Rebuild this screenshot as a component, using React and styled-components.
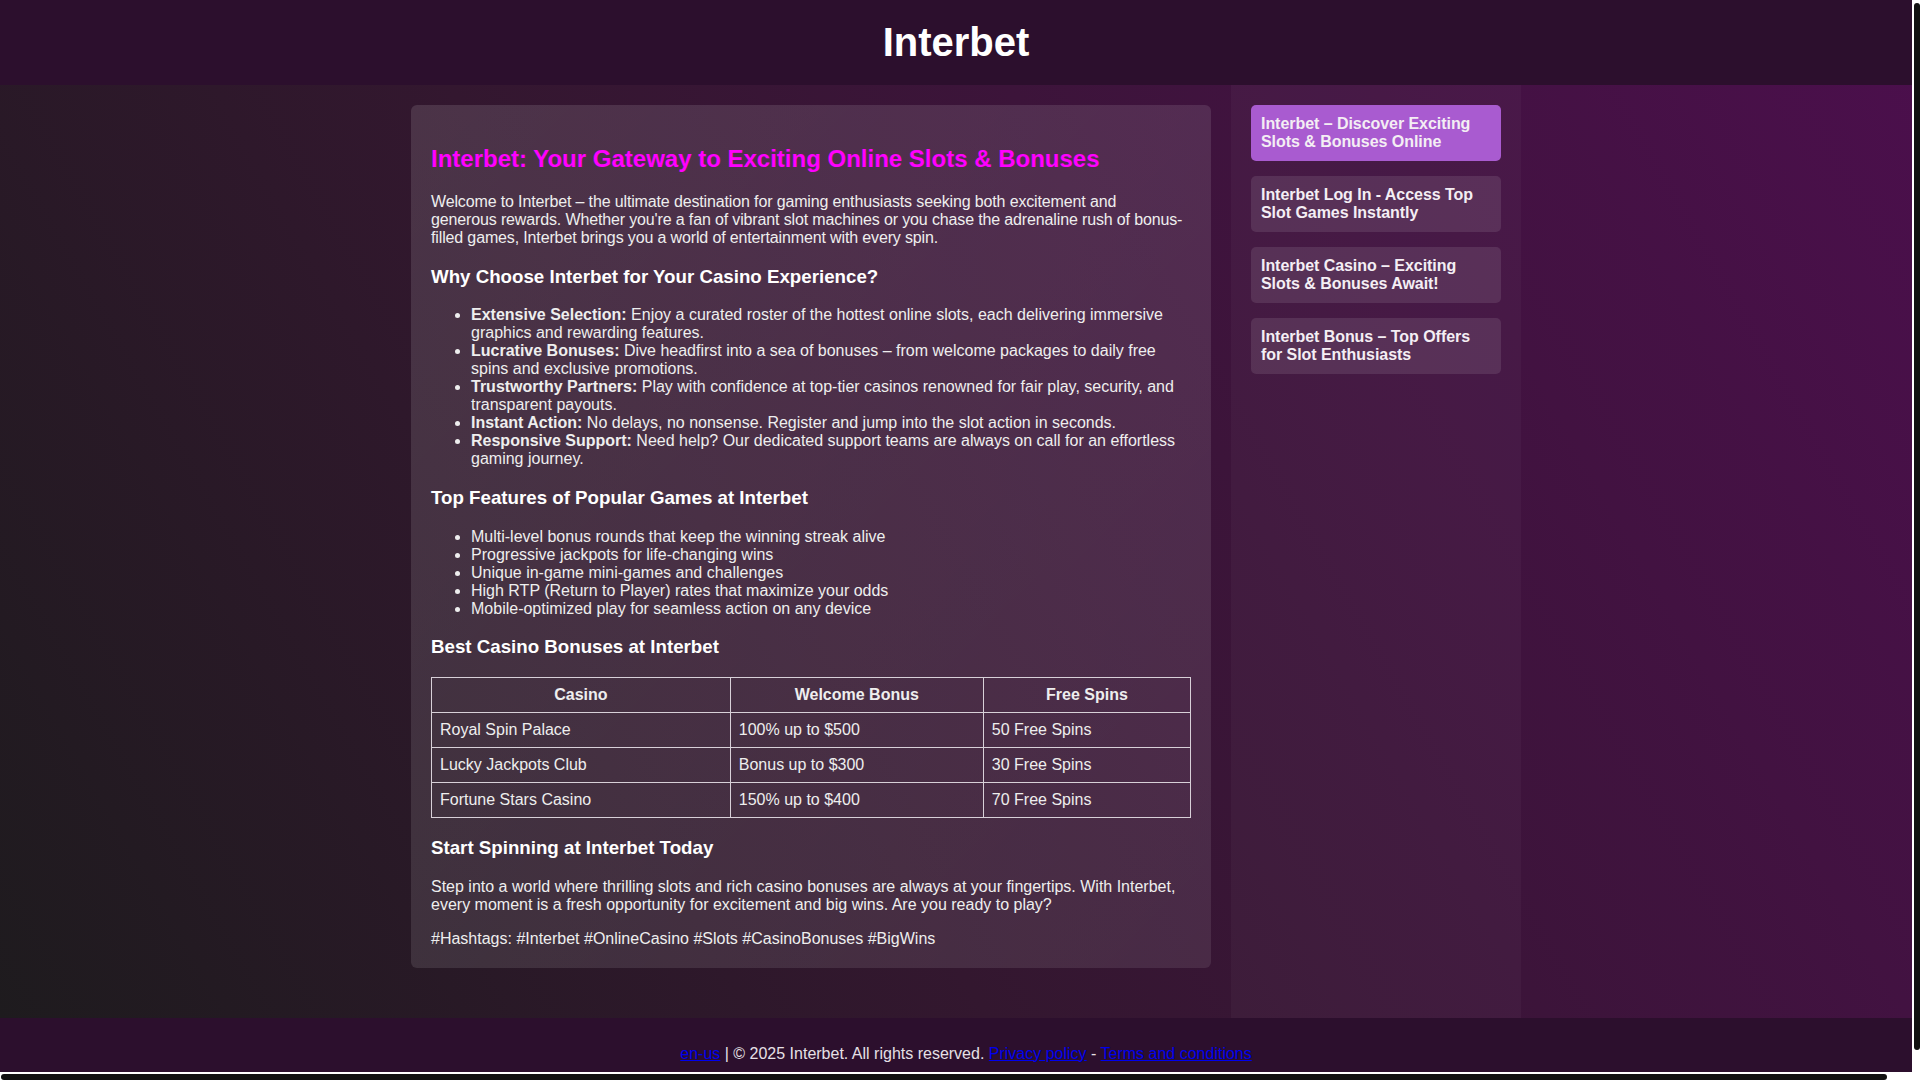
import React from 'react';
import styled, { createGlobalStyle } from 'styled-components';

const GlobalStyle = createGlobalStyle`
  html, body {
    overflow: hidden;
  }
  body {
    margin: 0;
    font-family: "Liberation Sans", Arial, sans-serif;
    font-size: 16px;
    color: #eeeeee;
    background: #2c0f2d;
  }
`;

const Viewport = styled.div`
  width: calc(100vw - 8px);
  height: calc(100vh - 8px);
  overflow: hidden;
`;

const Header = styled.header`
  background-color: #2c0f2d;
  padding: 19px 0 20px;
  text-align: center;
`;

const SiteTitle = styled.h1`
  margin: 0;
  font-size: 40px;
  font-weight: 700;
  color: #ffffff;
  line-height: 46px;
`;

const Page = styled.div`
  width: calc(100% + 20px);
`;

const Main = styled.main`
  display: flex;
  justify-content: center;
  gap: 20px;
  background: linear-gradient(60deg, #1e1b1e 0%, #33172f 40%, #4b0f4c 100%);
`;

const ContentColumn = styled.div`
  width: 800px;
  padding: 20px 0 50px;
`;

const Card = styled.article`
  box-sizing: border-box;
  width: 800px;
  padding: 20px;
  border-radius: 6px;
  background: linear-gradient(135deg, rgba(255, 255, 255, 0.12), rgba(255, 255, 255, 0.09));
`;

const PageTitle = styled.h2`
  font-size: 24px;
  font-weight: 700;
  margin: 19.92px 0;
  color: #ff00ff;
`;

const SectionTitle = styled.h3`
  font-size: 18.72px;
  font-weight: 700;
  margin: 18.72px 0;
  color: #ffffff;
`;

const Paragraph = styled.p`
  margin: 16px 0;
  color: #eeeeee;
  letter-spacing: ${props => (props.$tight ? '-0.14px' : 'normal')};
  &:last-child {
    margin-bottom: 0;
  }
`;

const List = styled.ul`
  margin: 16px 0;
  padding-left: 40px;
  color: #eeeeee;
`;

const Strong = styled.strong`
  font-weight: 700;
`;

const Table = styled.table`
  width: 100%;
  border-collapse: collapse;
  color: #eeeeee;
`;

const Th = styled.th`
  border: 1px solid #d8d0d8;
  padding: 8px;
  font-weight: 700;
  text-align: center;
`;

const Td = styled.td`
  border: 1px solid #d8d0d8;
  padding: 8px;
  text-align: left;
`;

const Sidebar = styled.aside`
  box-sizing: border-box;
  width: 290px;
  padding: 20px;
  background-color: rgba(255, 255, 255, 0.03);
  display: flex;
  flex-direction: column;
  gap: 15px;
`;

const SideLink = styled.a`
  display: block;
  padding: 10px;
  border-radius: 5px;
  font-weight: 700;
  color: #f4eef4;
  text-decoration: none;
  letter-spacing: -0.05px;
  background-color: ${props => (props.$active ? '#a95bd0' : 'rgba(255, 255, 255, 0.1)')};
`;

const Footer = styled.footer`
  background-color: #2c0f2d;
  padding: 27px 0 36px;
  text-align: center;
  color: #e6e0e6;
`;

const FooterLink = styled.a`
  color: #0000ee;
  text-decoration: underline;
`;

/* scrollbars drawn over the page edge, as in the screenshot */
const ScrollTrack = styled.div`
  position: fixed;
  background: #ffffff;
  ${props => (props.$vertical
    ? 'top: 0; right: 0; width: 8px; height: calc(100vh - 8px);'
    : 'left: 0; bottom: 0; height: 8px; width: 100vw;')}
`;

const ScrollThumb = styled.div`
  position: absolute;
  background: #111111;
  border-radius: 4px;
  ${props => (props.$vertical
    ? 'top: 3px; left: 2px; right: 0; bottom: 22px;'
    : 'left: 1px; top: 2px; bottom: 0; width: 1886px;')}
`;

const features = [
  ['Extensive Selection:', ' Enjoy a curated roster of the hottest online slots, each delivering immersive graphics and rewarding features.'],
  ['Lucrative Bonuses:', ' Dive headfirst into a sea of bonuses – from welcome packages to daily free spins and exclusive promotions.'],
  ['Trustworthy Partners:', ' Play with confidence at top-tier casinos renowned for fair play, security, and transparent payouts.'],
  ['Instant Action:', ' No delays, no nonsense. Register and jump into the slot action in seconds.'],
  ['Responsive Support:', ' Need help? Our dedicated support teams are always on call for an effortless gaming journey.'],
];

const gameFeatures = [
  'Multi-level bonus rounds that keep the winning streak alive',
  'Progressive jackpots for life-changing wins',
  'Unique in-game mini-games and challenges',
  'High RTP (Return to Player) rates that maximize your odds',
  'Mobile-optimized play for seamless action on any device',
];

const bonuses = [
  ['Royal Spin Palace', '100% up to $500', '50 Free Spins'],
  ['Lucky Jackpots Club', 'Bonus up to $300', '30 Free Spins'],
  ['Fortune Stars Casino', '150% up to $400', '70 Free Spins'],
];

const sideLinks = [
  'Interbet – Discover Exciting Slots & Bonuses Online',
  'Interbet Log In - Access Top Slot Games Instantly',
  'Interbet Casino – Exciting Slots & Bonuses Await!',
  'Interbet Bonus – Top Offers for Slot Enthusiasts',
];

export default function App() {
  return (
    <>
      <GlobalStyle />
      <Viewport>
        <Header>
          <SiteTitle>Interbet</SiteTitle>
        </Header>
        <Page>
          <Main>
            <ContentColumn>
              <Card>
                <PageTitle>Interbet: Your Gateway to Exciting Online Slots &amp; Bonuses</PageTitle>
                <Paragraph $tight>
                  Welcome to Interbet – the ultimate destination for gaming enthusiasts seeking both excitement and
                  <br />
                  generous rewards. Whether you're a fan of vibrant slot machines or you chase the adrenaline rush of
                  bonus-filled games, Interbet brings you a world of entertainment with every spin.
                </Paragraph>

                <SectionTitle>Why Choose Interbet for Your Casino Experience?</SectionTitle>
                <List>
                  {features.map(([label, text]) => (
                    <li key={label}>
                      <Strong>{label}</Strong>
                      {text}
                    </li>
                  ))}
                </List>

                <SectionTitle>Top Features of Popular Games at Interbet</SectionTitle>
                <List>
                  {gameFeatures.map(item => (
                    <li key={item}>{item}</li>
                  ))}
                </List>

                <SectionTitle>Best Casino Bonuses at Interbet</SectionTitle>
                <Table>
                  <thead>
                    <tr>
                      <Th>Casino</Th>
                      <Th>Welcome Bonus</Th>
                      <Th>Free Spins</Th>
                    </tr>
                  </thead>
                  <tbody>
                    {bonuses.map(row => (
                      <tr key={row[0]}>
                        {row.map(cell => (
                          <Td key={cell}>{cell}</Td>
                        ))}
                      </tr>
                    ))}
                  </tbody>
                </Table>

                <SectionTitle>Start Spinning at Interbet Today</SectionTitle>
                <Paragraph>
                  Step into a world where thrilling slots and rich casino bonuses are always at your fingertips. With
                  Interbet, every moment is a fresh opportunity for excitement and big wins. Are you ready to play?
                </Paragraph>
                <Paragraph>#Hashtags: #Interbet #OnlineCasino #Slots #CasinoBonuses #BigWins</Paragraph>
              </Card>
            </ContentColumn>
            <Sidebar>
              {sideLinks.map((title, i) => (
                <SideLink key={title} href="#" $active={i === 0}>
                  {title}
                </SideLink>
              ))}
            </Sidebar>
          </Main>
          <Footer>
            <FooterLink href="#">en-us</FooterLink> | © 2025 Interbet. All rights reserved.{' '}
            <FooterLink href="#">Privacy policy</FooterLink> - <FooterLink href="#">Terms and conditions</FooterLink>
          </Footer>
        </Page>
      </Viewport>
      <ScrollTrack $vertical>
        <ScrollThumb $vertical />
      </ScrollTrack>
      <ScrollTrack>
        <ScrollThumb />
      </ScrollTrack>
    </>
  );
}
